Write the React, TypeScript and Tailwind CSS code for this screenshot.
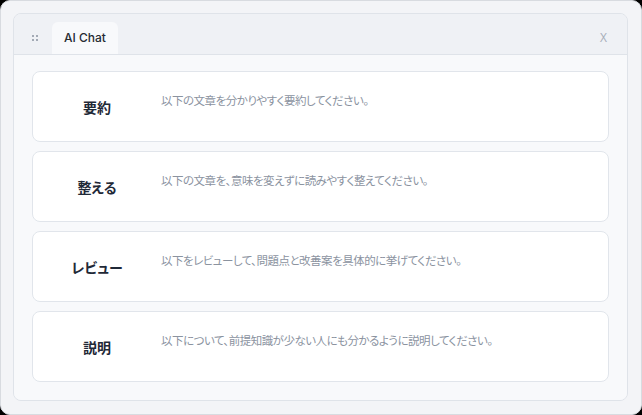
import React from 'react';

const prompts = [
  { id: 'summary', label: '要約', text: '以下の文章を分かりやすく要約してください。' },
  { id: 'tidy', label: '整える', text: '以下の文章を、意味を変えずに読みやすく整えてください。' },
  { id: 'review', label: 'レビュー', text: '以下をレビューして、問題点と改善案を具体的に挙げてください。' },
  { id: 'explain', label: '説明', text: '以下について、前提知識が少ない人にも分かるように説明してください。' },
];

const jp = { fontFamily: '"Noto Sans CJK JP", "Noto Sans", sans-serif', fontFeatureSettings: '"palt"' };

const Grip = () => (
  <div className="grid grid-cols-2 gap-[2px]">
    {[0, 1, 2, 3].map((i) => (
      <span key={i} className="w-[2px] h-[2px] bg-[#a3aab5]" />
    ))}
  </div>
);

export default function App() {
  return (
    <div className="w-[642px] h-[415px] bg-black">
      <div className="h-full rounded-[10px] border border-[#d8dbe0] bg-[#f3f4f7] pt-[12px] pl-[12px] pr-[13px] pb-[13px]">
        <div className="h-full flex flex-col rounded-[8px] border border-[#dfe3e9] overflow-hidden">
          {/* tab strip */}
          <div className="h-[41px] shrink-0 flex items-end bg-[#eff1f5] border-b border-[#dfe3e9] pl-[18px] pr-[20px]">
            <div className="h-[32px] flex items-center">
              <Grip />
            </div>
            <div
              className="ml-[14px] h-[32px] w-[66px] flex items-center justify-center rounded-t-[6px] bg-[#f8f9fb] text-[12px] font-medium text-[#262b33]"
              style={{ fontFamily: 'Inter, "Liberation Sans", sans-serif' }}
            >
              AI Chat
            </div>
            <div
              className="ml-auto h-[32px] flex items-center text-[12px] text-[#a6adb8]"
              style={{ fontFamily: '"Open Sans", "Liberation Sans", sans-serif' }}
            >
              X
            </div>
          </div>

          {/* prompt cards */}
          <div className="flex-1 flex flex-col gap-[9px] bg-[#f8f9fb] px-[18px] pt-[16px]">
            {prompts.map((p) => (
              <div
                key={p.id}
                className="h-[71px] flex rounded-[8px] border border-[#e1e5eb] bg-white"
                style={jp}
              >
                <div className="w-[128px] shrink-0 flex items-center justify-center pt-[1px] text-[14px] font-bold text-[#1f2937]">
                  {p.label}
                </div>
                <div className="pt-[20px] text-[11.5px] leading-[16px] tracking-[-0.5px] text-[#8b939f]">
                  {p.text}
                </div>
              </div>
            ))}
          </div>
        </div>
      </div>
    </div>
  );
}
